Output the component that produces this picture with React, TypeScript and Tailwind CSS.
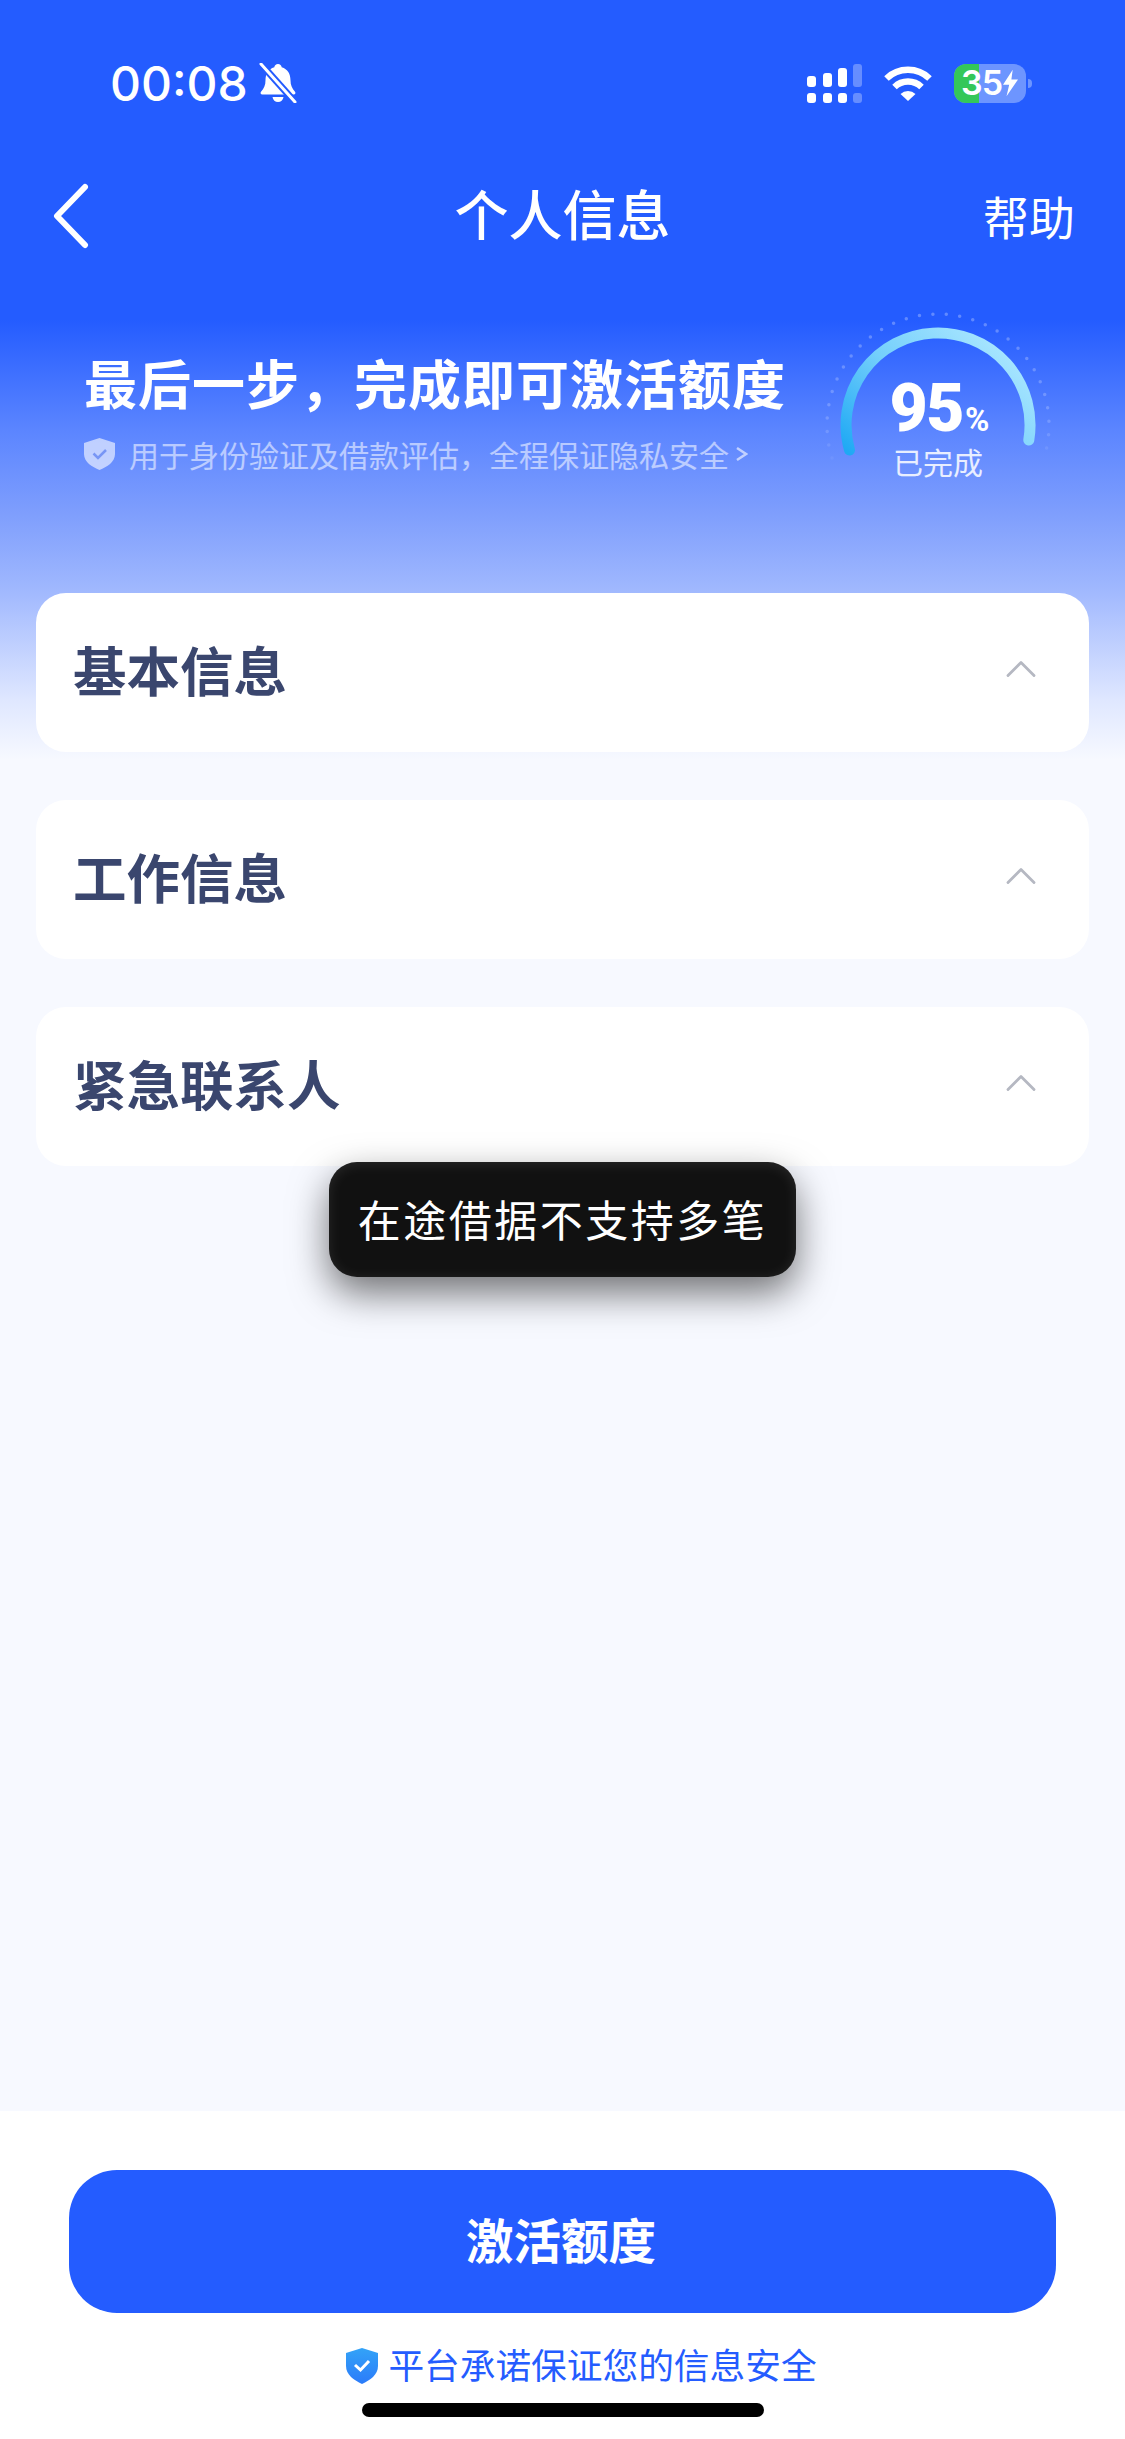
import { ChevronUp } from "lucide-react";

const sections = ["基本信息", "工作信息", "紧急联系人"];

function SignalIcon() {
    return (
        <svg width="55" height="39" viewBox="0 0 55 39" fill="white">
            <rect x="0" y="12" width="9" height="11" rx="3" />
            <rect x="16" y="9" width="9" height="14" rx="3" />
            <rect x="31" y="4" width="9" height="19" rx="3" />
            <rect x="46" y="0" width="9" height="23" rx="3" opacity="0.3" />
            <rect x="0" y="29" width="9" height="10" rx="3" />
            <rect x="16" y="29" width="9" height="10" rx="3" />
            <rect x="31" y="29" width="9" height="10" rx="3" />
            <rect x="46" y="29" width="9" height="10" rx="3" opacity="0.3" />
        </svg>
    );
}

function WifiIcon() {
    return (
        <svg width="48" height="35" viewBox="0 0 48 35" fill="none" stroke="white" strokeWidth="6.5">
            <path d="M2.5 12.5 A31 31 0 0 1 45.5 12.5" />
            <path d="M10.5 21 A19.5 19.5 0 0 1 37.5 21" />
            <path d="M16.5 28 L24 35 L31.5 28 A11 11 0 0 0 16.5 28 Z" fill="white" stroke="none" />
        </svg>
    );
}

function BellOff() {
    return (
        <svg width="40" height="40" viewBox="0 0 40 40" fill="white">
            <path d="M20 1 c2 0 3.500 1.500 3.700 3.300 c6 1.700 8.800 6.800 8.800 13 c0 5 1.500 8 4.500 11.500 c1 1.300 .3 2.700 -1.300 2.700 H4.300 c-1.600 0 -2.300 -1.400 -1.300 -2.700 c3 -3.500 4.500 -6.500 4.500 -11.500 c0 -6.200 2.800 -11.300 8.800 -13 C16.500 2.500 18 1 20 1 Z" />
            <path d="M14.500 34 h11 c-.4 3 -2.700 5 -5.500 5 s-5.100 -2 -5.500 -5 Z" />
            <path d="M3 1 L37 39" stroke="#245cff" strokeWidth="7" />
            <path d="M3 1 L37 39" stroke="white" strokeWidth="3" strokeLinecap="round" />
        </svg>
    );
}

function Battery() {
    return (
        <div className="flex items-center gap-[2px]">
            <div className="relative h-[39px] w-[72px] overflow-hidden rounded-[12px] bg-[#6d95ff]">
                <div className="absolute top-0 bottom-0 left-0 w-[25px] bg-[#34c759]" />
                <div className="relative flex h-full items-center pl-[7px] font-['Inter',sans-serif] text-[34px] leading-none font-semibold tracking-[-1px] text-white">
                    <span>35</span>
                    <svg width="15" height="28" viewBox="0 0 17 30" fill="white" className="ml-[1px] shrink-0">
                        <path d="M11 0 L0 17 H7 L4 30 L17 11 H9.500 Z" />
                    </svg>
                </div>
            </div>
            <div className="h-[9px] w-[4px] rounded-r-full bg-[#6d95ff]" />
        </div>
    );
}

function Gauge() {
    return (
        <div className="relative h-[190px] w-[240px] shrink-0">
            <svg width="240" height="190" viewBox="0 0 240 190" fill="none">
                <defs>
                    <linearGradient id="arc" x1="0" y1="1" x2="1" y2="0.3">
                        <stop offset="0" stopColor="#1fa9f4" />
                        <stop offset="0.5" stopColor="#74cffb" />
                        <stop offset="1" stopColor="#a9e6ff" />
                    </linearGradient>
                    <linearGradient id="dots" x1="0" y1="0" x2="0" y2="1">
                        <stop offset="0" stopColor="white" stopOpacity="0.28" />
                        <stop offset="0.7" stopColor="white" stopOpacity="0.2" />
                        <stop offset="1" stopColor="white" stopOpacity="0.05" />
                    </linearGradient>
                </defs>
                <path
                    d="M14 158 A111 111 0 1 1 226 158"
                    stroke="url(#dots)"
                    strokeWidth="3.500"
                    strokeLinecap="round"
                    strokeDasharray="0 13.500"
                />
                <path
                    d="M31.500 150 A92 92 0 1 1 210.800 140"
                    stroke="url(#arc)"
                    strokeWidth="11"
                    strokeLinecap="round"
                />
            </svg>
            <div className="absolute top-[80px] left-0 flex w-full flex-col items-center">
                <div className="flex h-[58px] items-baseline pl-[3px] font-['Roboto',sans-serif] leading-[58px] font-black text-white">
                    <span className="text-[66px] tracking-[-1.500px]">95</span>
                    <span className="ml-[2px] text-[33px] font-bold">%</span>
                </div>
                <span className="mt-[6px] text-[30px] leading-[34px] text-white/85">已完成</span>
            </div>
        </div>
    );
}

export default function App() {
    return (
        <div className="relative flex h-[2439px] w-[1125px] flex-col overflow-hidden bg-[linear-gradient(180deg,#245cff_0px,#245cff_320px,#5b85ff_430px,#7d9dfd_510px,#a0b8fe_590px,#dfe7ff_700px,#f7f9ff_760px)] font-['Noto_Sans_CJK_SC',sans-serif]">
            <div className="flex h-[166px] shrink-0 items-center justify-between pr-[93px] pl-[110px]">
                <div className="flex items-center gap-[10px]">
                    <span className="pt-[2px] font-['Inter',sans-serif] text-[48px] leading-none font-medium text-white">00:08</span>
                    <BellOff />
                </div>
                <div className="flex items-center gap-[22px]">
                    <SignalIcon />
                    <WifiIcon />
                    <Battery />
                </div>
            </div>

            <div className="grid h-[98px] shrink-0 grid-cols-[1fr_auto_1fr] items-center pr-[50px] pl-[50px]">
                <svg width="40" height="66" viewBox="0 0 40 66" fill="none" stroke="white" strokeWidth="6" strokeLinecap="round" strokeLinejoin="round" className="mt-[2px]">
                    <path d="M35 4 L7 33 L35 62" />
                </svg>
                <h1 className="pb-[4px] text-[54px] leading-none font-medium text-white">个人信息</h1>
                <span className="justify-self-end text-[46px] leading-none text-white">帮助</span>
            </div>

            <div className="flex h-[329px] shrink-0 items-start justify-between pr-[67px] pl-[84px]">
                <div className="pt-[83px]">
                    <h2 className="text-[53px] leading-[70px] font-bold tracking-[1px] whitespace-nowrap text-white">最后一步，完成即可激活额度</h2>
                    <div className="mt-[17px] flex items-center">
                        <svg width="31" height="32" viewBox="0 0 31 32" className="mr-[14px]">
                            <path d="M15.500 0 L31 5 V16 C31 24 23 29 15.500 32 C8 29 0 24 0 16 V5 Z" fill="white" fillOpacity="0.6" />
                            <path d="M9.500 15.500 L14 20 L22 12" fill="none" stroke="#7896f5" strokeWidth="2.500" />
                        </svg>
                        <span className="text-[30px] leading-[40px] whitespace-nowrap text-white/55">用于身份验证及借款评估，全程保证隐私安全</span>
                        <svg width="13" height="18" viewBox="0 0 13 18" fill="none" stroke="white" strokeOpacity="0.6" strokeWidth="2.500" className="ml-[6px]">
                            <path d="M2 3 L11 9 L2 15" />
                        </svg>
                    </div>
                </div>
                <div className="pt-[36px]">
                    <Gauge />
                </div>
            </div>

            <div className="flex flex-col gap-[48px] px-[36px]">
                {sections.map((title) => (
                    <div key={title} className="flex h-[159px] items-center justify-between rounded-[30px] bg-white pr-[42px] pb-[8px] pl-[37px]">
                        <span className="text-[53.500px] leading-none font-bold text-[#3a466e]">{title}</span>
                        <ChevronUp size={52} strokeWidth={1.3} color="#b5b8c2" />
                    </div>
                ))}
            </div>

            <div className="flex-1" />

            <div className="flex h-[328px] shrink-0 flex-col items-center bg-white pt-[59px]">
                <button className="flex h-[143px] w-[987px] items-center justify-center rounded-[48px] bg-[#245cff] pr-[3px] pb-[5px] text-[47.500px] leading-none font-bold text-white">
                    激活额度
                </button>
                <div className="mt-[30px] ml-[38px] flex items-center gap-[10px]">
                    <svg width="32" height="36" viewBox="0 0 32 36" className="mt-[3px]">
                        <defs>
                            <linearGradient id="shield" x1="0" y1="0" x2="0" y2="1">
                                <stop offset="0" stopColor="#33a3f7" />
                                <stop offset="1" stopColor="#2b7bfa" />
                            </linearGradient>
                        </defs>
                        <path d="M16 0 L32 5 V18 C32 27 24 32 16 36 C8 32 0 27 0 18 V5 Z" fill="url(#shield)" />
                        <path d="M9 17 L14.500 22 L23 13" fill="none" stroke="white" strokeWidth="3" />
                    </svg>
                    <span className="text-[35.700px] leading-[42px] text-[#245cff]">平台承诺保证您的信息安全</span>
                </div>
                <div className="mt-[18px] h-[14px] w-[402px] rounded-full bg-black" />
            </div>

            <div className="absolute top-[1162px] left-[329px] flex h-[115px] w-[467px] items-center justify-center rounded-[28px] bg-[#111111] pb-[3px] shadow-[0_16px_38px_rgba(0,0,0,0.55),inset_0_2px_14px_rgba(255,255,255,0.1)]">
                <span className="text-[43px] leading-none tracking-[2.500px] text-white">在途借据不支持多笔</span>
            </div>
        </div>
    );
}
